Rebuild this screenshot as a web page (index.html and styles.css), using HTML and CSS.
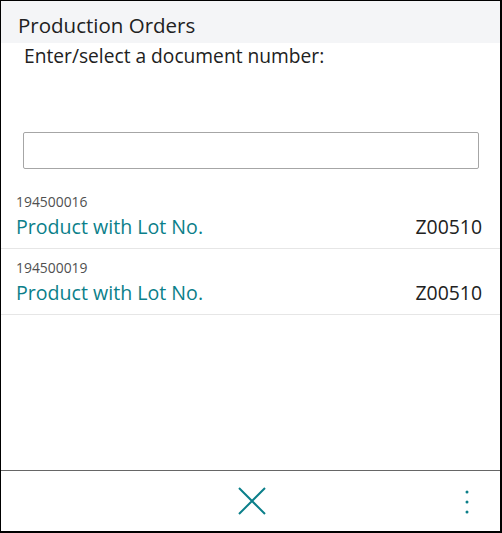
FILE: index.html
```html
<!DOCTYPE html>
<html>
<head>
<meta charset="utf-8">
<link rel="stylesheet" href="styles.css">
</head>
<body>
<div class="frame">
  <div class="header">Production Orders</div>
  <div class="prompt">Enter/select a document number:</div>
  <div class="input-wrap"><div class="input"></div></div>
  <div class="list">
    <div class="item">
      <div class="num">194500016</div>
      <div class="row"><span class="desc">Product with Lot No.</span><span class="code">Z00510</span></div>
    </div>
    <div class="item">
      <div class="num">194500019</div>
      <div class="row"><span class="desc">Product with Lot No.</span><span class="code">Z00510</span></div>
    </div>
  </div>
  <div class="footer">
    <div class="close">
      <svg width="28" height="28" viewBox="0 0 28 28"><path d="M1 1 L27 27 M27 1 L1 27" stroke="#0b7f8a" stroke-width="2" fill="none"/></svg>
    </div>
    <div class="more">
      <svg width="4" height="26" viewBox="0 0 4 26"><circle cx="2" cy="2" r="1.5" fill="#0b7f8a"/><circle cx="2" cy="12" r="1.5" fill="#0b7f8a"/><circle cx="2" cy="22" r="1.5" fill="#0b7f8a"/></svg>
    </div>
  </div>
</div>
</body>
</html>
```
FILE: styles.css
```css
html, body { margin: 0; padding: 0; background: #fff; }
body { font-family: "Open Sans", "Noto Sans", sans-serif; color: #222; }
.frame {
  width: 502px; height: 533px; box-sizing: border-box;
  border-style: solid; border-color: #000;
  border-width: 1px 2px 2px 1px;
  display: flex; flex-direction: column;
}
.header {
  background: #f4f5f7; height: 42px; box-sizing: border-box;
  padding: 10px 0 0 17px; font-size: 20.5px; line-height: 28px; color: #212121;
}
.prompt {
  padding: 0 0 0 23px; font-size: 19.2px; line-height: 26px; margin-top: 0; color: #212121;
}
.input-wrap { padding: 63px 21px 0 22px; }
.input {
  height: 37px; box-sizing: border-box; border: 1px solid #a6a6a6; border-radius: 2px;
}
.list { margin-top: 14px; flex: 1; }
.item { border-bottom: 1px solid #e6e6e6; padding: 10px 18px 0 15px; height: 66px; box-sizing: border-box; }
.num { font-size: 13.9px; line-height: 18px; color: #505050; }
.row { display: flex; justify-content: space-between; align-items: baseline; margin-top: 2px; }
.desc { font-size: 19.6px; line-height: 28px; color: #0b7f8a; }
.code { font-size: 19.4px; line-height: 28px; color: #212121; }
.footer {
  border-top: 1px solid #666; height: 61px; box-sizing: border-box;
  display: flex; align-items: center; position: relative;
}
.close { flex: 1; display: flex; justify-content: center; padding-left: 2px; }
.close svg { display: block; }
.more { position: absolute; right: 31px; top: 19px; }
.more svg { display: block; }
```
